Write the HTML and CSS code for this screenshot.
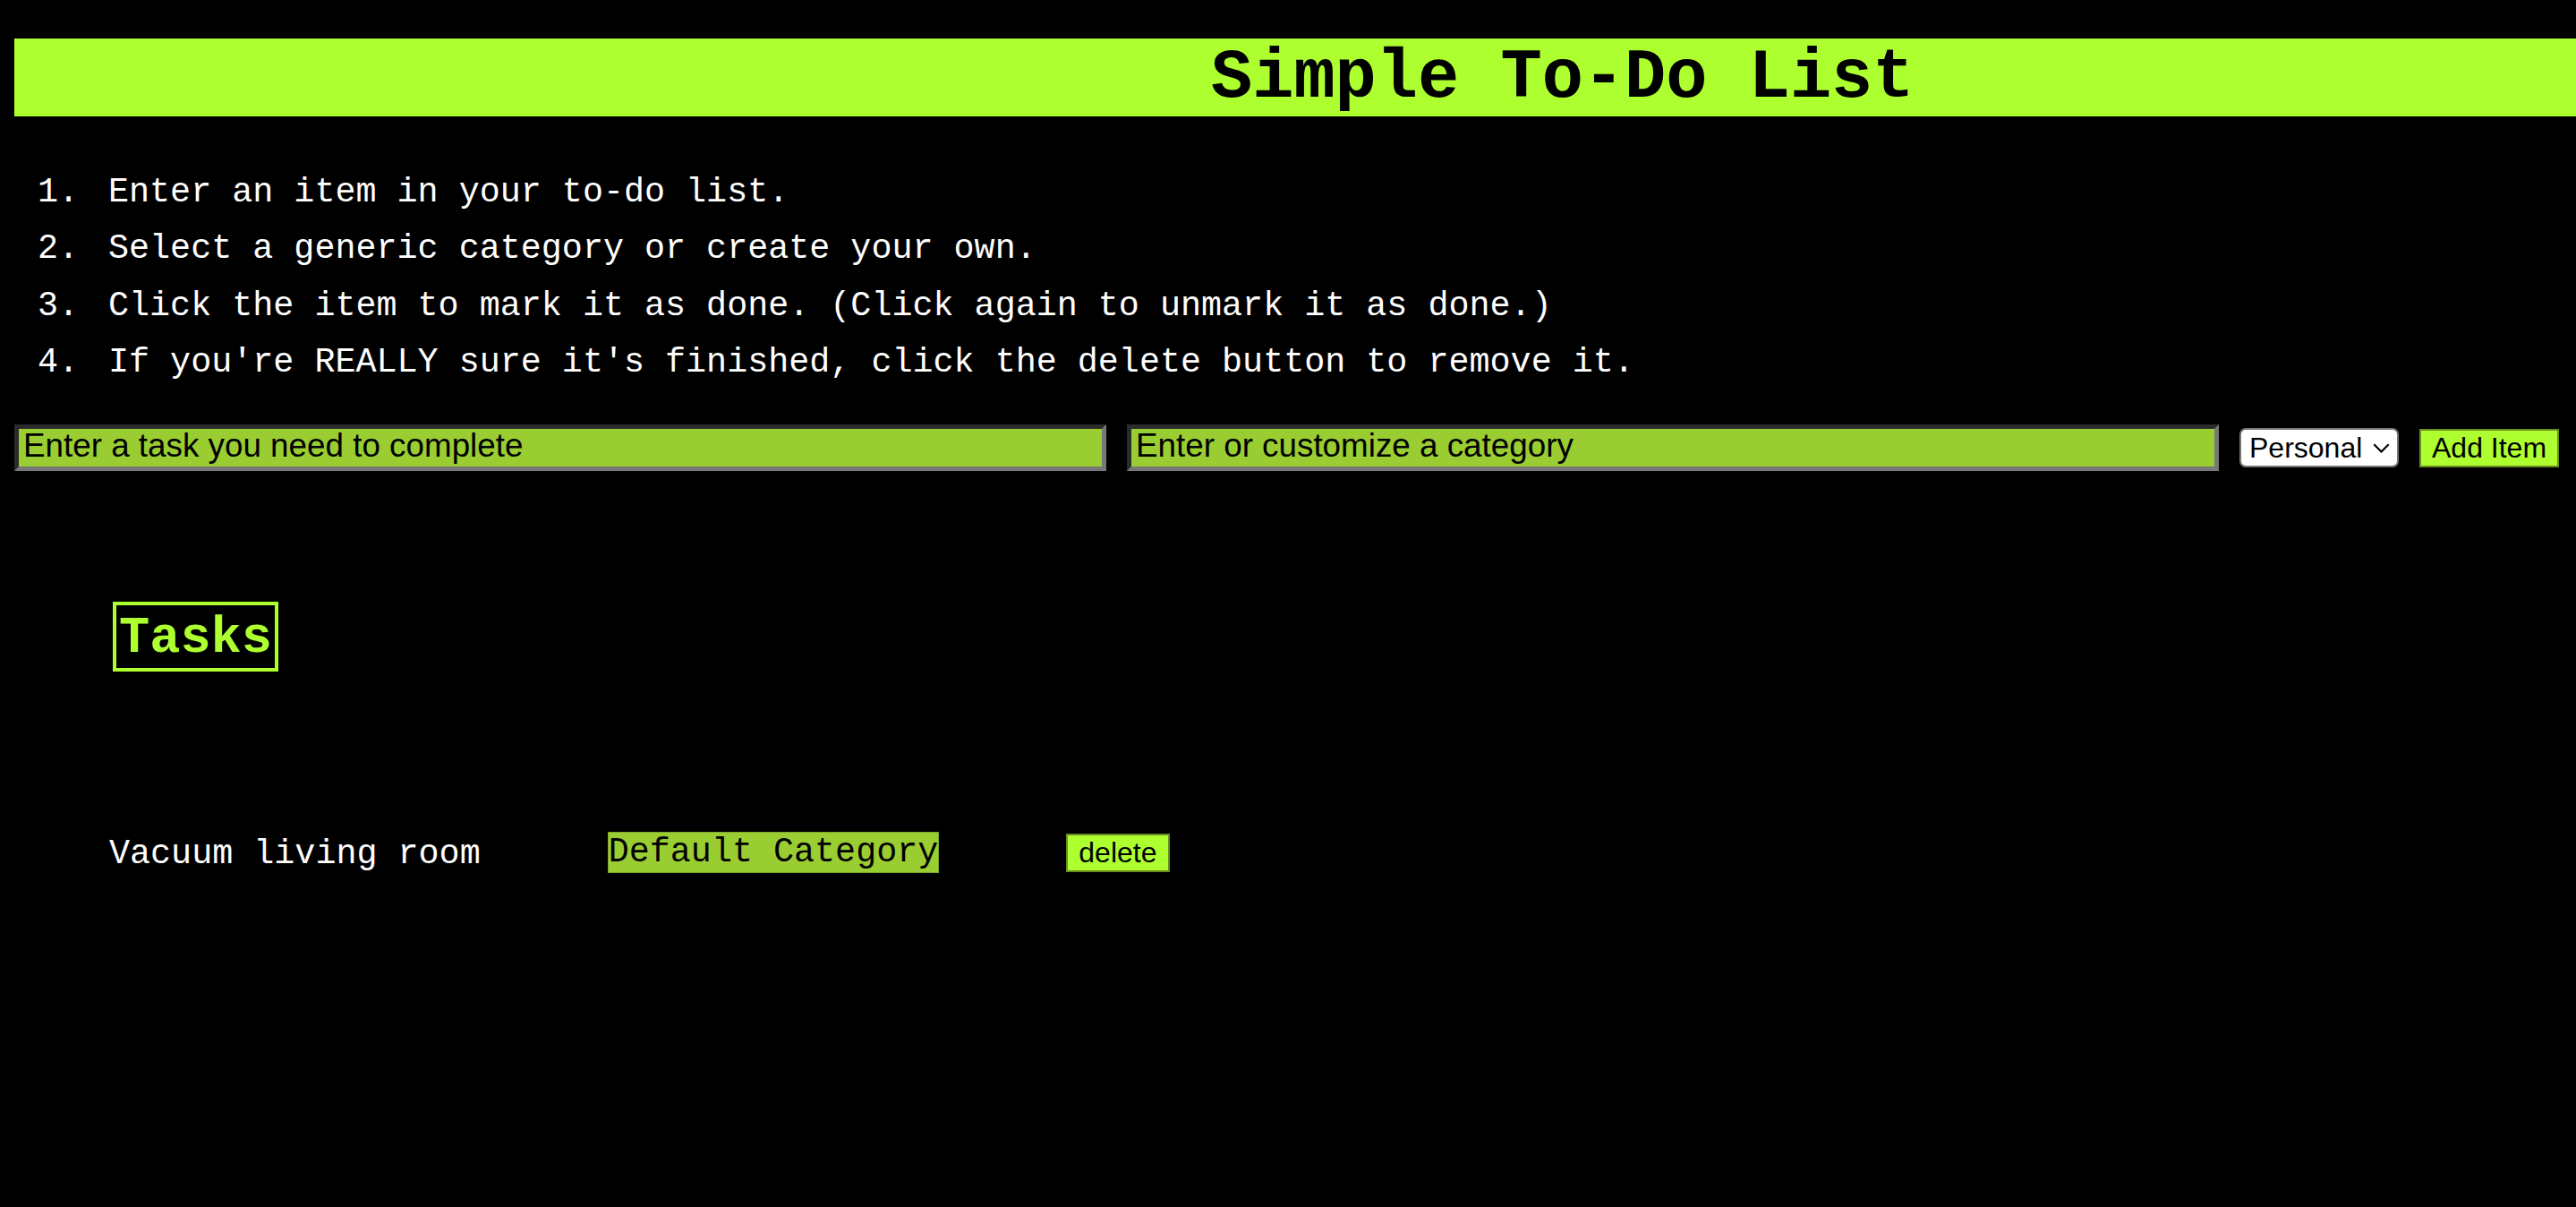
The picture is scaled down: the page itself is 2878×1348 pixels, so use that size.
FILE: index.html
```html
<!DOCTYPE html>
<html lang="en">
<head>
<meta charset="utf-8">
<title>Simple To-Do List</title>
<link rel="stylesheet" href="styles.css">
</head>
<body>
<header class="banner">
  <h1 class="title">Simple To-Do List</h1>
</header>
<ol class="steps">
  <li>Enter an item in your to-do list.</li>
  <li>Select a generic category or create your own.</li>
  <li>Click the item to mark it as done. (Click again to unmark it as done.)</li>
  <li>If you're REALLY sure it's finished, click the delete button to remove it.</li>
</ol>
<form class="entry">
  <input class="field" type="text" placeholder="Enter a task you need to complete">
  <input class="field" type="text" placeholder="Enter or customize a category">
  <span class="select-wrap">
    <select class="picker">
      <option>Personal</option>
      <option>Work</option>
      <option>Home</option>
      <option>School</option>
    </select>
    <svg class="chevron" viewBox="0 0 19 11" aria-hidden="true"><polyline points="1.3,1.3 9.5,9.5 17.7,1.3" fill="none" stroke="#000" stroke-width="2.2"/></svg>
  </span>
  <button class="btn" type="button">Add Item</button>
</form>
<section class="tasks">
  <h2 class="tasks-title">Tasks</h2>
  <ul class="task-list">
    <li class="task">
      <span class="task-name">Vacuum living room</span>
      <span class="task-cat">Default Category</span>
      <button class="btn btn-delete" type="button">delete</button>
    </li>
  </ul>
</section>
</body>
</html>
```
FILE: styles.css
```css
html {
  background: #000;
}

body {
  margin: 0;
  padding: 43px 0 0 16px;
  background: #000;
  color: #fff;
  font-family: "Liberation Mono", "Courier New", monospace;
}

.banner {
  background: #adff2f;
}

.title {
  margin: 0;
  padding: 2px 0 0 1337px;
  color: #000;
  font-family: "Liberation Mono", "Courier New", monospace;
  font-weight: bold;
  font-size: 77px;
  line-height: 85px;
  white-space: nowrap;
}

.steps {
  list-style: none;
  counter-reset: step;
  margin: 54px 0 0;
  padding: 0 0 0 26px;
  font-size: 38.4px;
  line-height: 63.4px;
}

.steps li {
  counter-increment: step;
  display: flex;
}

.steps li::before {
  content: counter(step) ".";
  flex: none;
  width: 79px;
}

.entry {
  display: flex;
  align-items: center;
  gap: 23px;
  margin: 36.4px 0 0;
}

.field {
  box-sizing: border-box;
  width: 1220px;
  height: 52px;
  margin: 0;
  padding: 0 5px 5px;
  border: 5px solid;
  border-color: #2b2b2b #787878 #787878 #2b2b2b;
  background: #9acd32;
  color: #000;
  font-family: "Liberation Sans", Arial, sans-serif;
  font-size: 36.8px;
}

.field::placeholder {
  color: #000;
  opacity: 1;
}

.select-wrap {
  position: relative;
  display: inline-flex;
}

.picker {
  appearance: none;
  -webkit-appearance: none;
  box-sizing: border-box;
  width: 178px;
  height: 44px;
  margin: 0;
  padding: 0 0 0 9px;
  border: 2px solid #767676;
  border-radius: 7px;
  background: #fff;
  color: #000;
  font-family: "Liberation Sans", Arial, sans-serif;
  font-size: 32px;
}

.chevron {
  position: absolute;
  right: 10px;
  top: 50%;
  width: 19px;
  height: 11px;
  margin-top: -5px;
  pointer-events: none;
}

.btn {
  box-sizing: border-box;
  margin: 0;
  padding: 1px 12px;
  border: 2px solid #6b8e23;
  background: #adff2f;
  color: #000;
  font-family: "Liberation Sans", Arial, sans-serif;
  font-size: 32px;
  line-height: normal;
}

.tasks {
  display: flex;
  flex-direction: column;
  align-items: flex-start;
  margin: 146px 0 0 106px;
}

.tasks-title {
  margin: 0 0 0 4px;
  padding: 5px 3px 1px;
  border: 4px solid #adff2f;
  color: #adff2f;
  font-family: "Liberation Mono", "Courier New", monospace;
  font-weight: bold;
  font-size: 57px;
  line-height: normal;
}

.task-list {
  list-style: none;
  margin: 178px 0 0;
  padding: 0;
}

.task {
  display: flex;
  align-items: center;
  gap: 142px;
  font-size: 38.4px;
  line-height: normal;
}

.task-name {
  color: #fff;
  padding-top: 4px;
}

.task-cat {
  background: #9acd32;
  color: #000;
  border: 1px solid #7ea82a;
}
```
